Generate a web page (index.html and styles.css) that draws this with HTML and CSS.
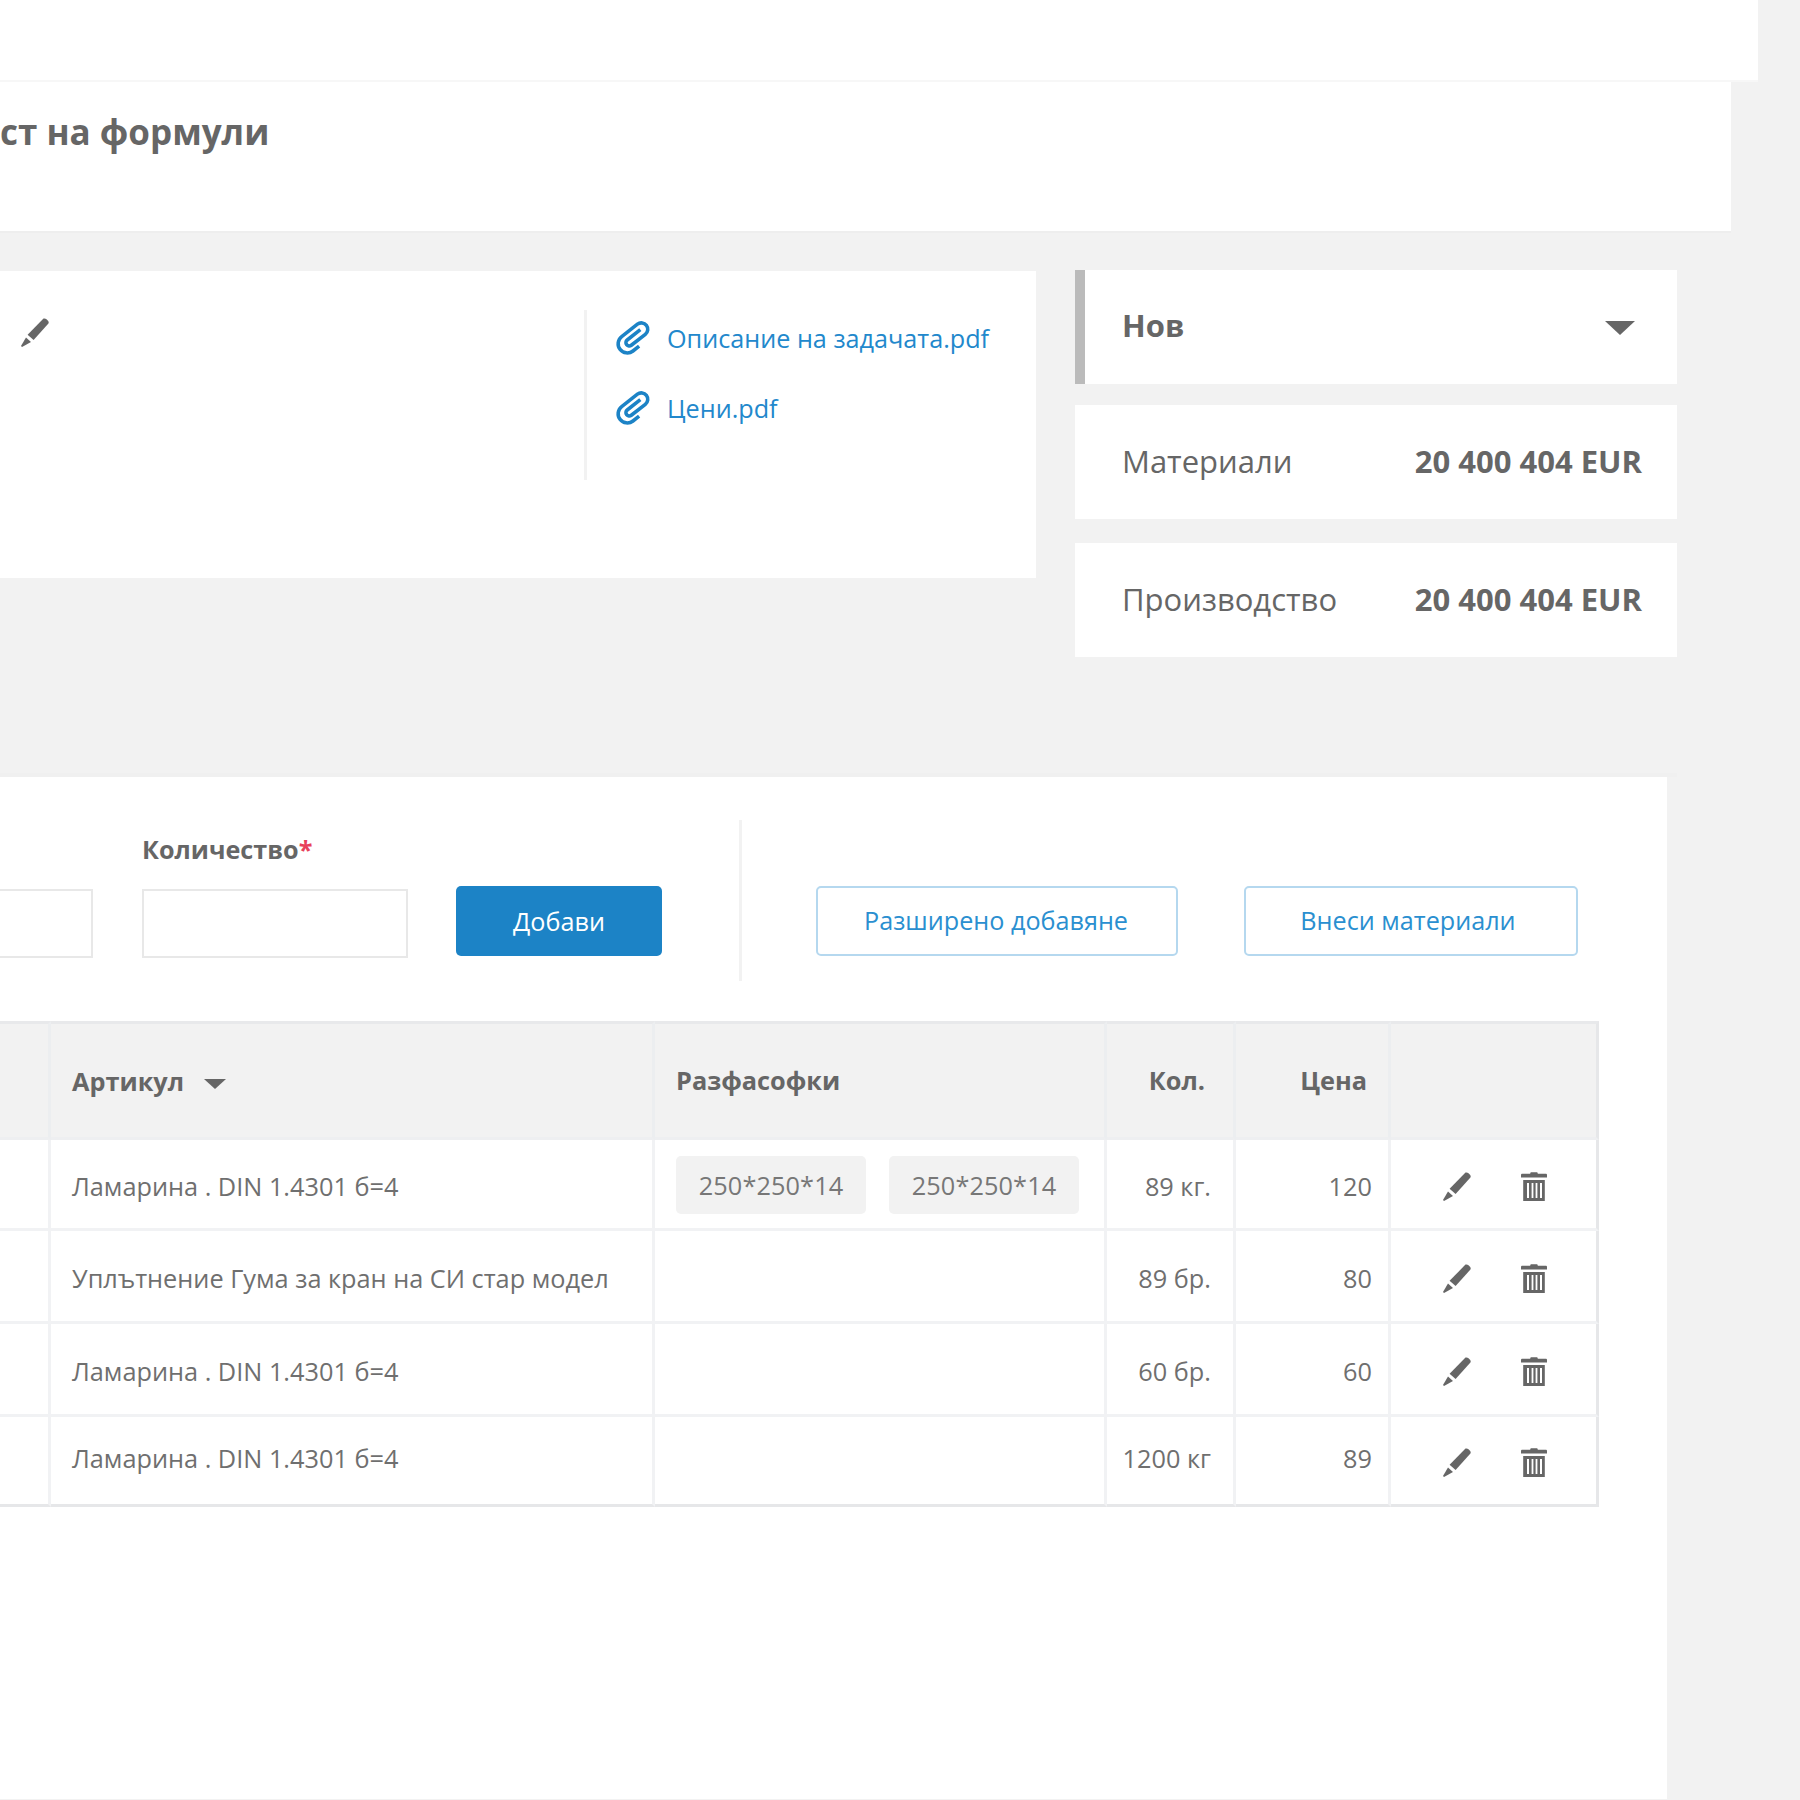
FILE: index.html
```html
<!DOCTYPE html>
<html lang="bg">
<head>
<meta charset="UTF-8">
<meta name="viewport" content="width=device-width, initial-scale=1.0">
<title>Лист на формули</title>
<link rel="stylesheet" href="styles.css">
</head>
<body>
    <div class="topbar"></div>
    <div class="page-head">
        <h1>ст на формули</h1>
    </div>

    <div class="summary">
        <div class="info-card">
            <div class="info-main">
                <svg class="icon pencil" viewBox="0 0 28 29"><use href="#ico-pencil"></use></svg>
            </div>
            <div class="files">
                <a class="file" href="#"><svg class="icon clip" viewBox="0 0 36 30"><use href="#ico-clip"></use></svg>Описание на задачата.pdf</a>
                <a class="file" href="#"><svg class="icon clip" viewBox="0 0 36 30"><use href="#ico-clip"></use></svg>Цени.pdf</a>
            </div>
        </div>
        <div class="totals">
            <div class="total-row status">
                <b>Нов</b>
                <span class="caret caret-big"></span>
            </div>
            <div class="total-row">
                <span>Материали</span>
                <b>20 400 404 EUR</b>
            </div>
            <div class="total-row total-last">
                <span>Производство</span>
                <b>20 400 404 EUR</b>
            </div>
        </div>
    </div>

    <div class="panel-wrap">
        <div class="panel">
            <form class="add-form">
                <div class="field field-cut">
                    <input type="text">
                </div>
                <div class="field field-qty">
                    <label>Количество<i>*</i></label>
                    <input type="text">
                </div>
                <button type="button" class="btn btn-primary">Добави</button>
                <div class="sep"></div>
                <button type="button" class="btn btn-outline btn-wide">Разширено добавяне</button>
                <button type="button" class="btn btn-outline btn-import">Внеси материали</button>
            </form>

            <table class="items">
                <colgroup>
                    <col class="c-first"><col class="c-article"><col class="c-packs"><col class="c-qty"><col class="c-price"><col class="c-actions">
                </colgroup>
                <thead>
                    <tr>
                        <th></th>
                        <th class="th-article">Артикул <span class="caret"></span></th>
                        <th>Разфасофки</th>
                        <th class="num th-qty">Кол.</th>
                        <th class="num">Цена</th>
                        <th></th>
                    </tr>
                </thead>
                <tbody>
                    <tr class="r1">
                        <td></td>
                        <td>Ламарина . DIN 1.4301 б=4</td>
                        <td class="tags"><span class="tag">250*250*14</span><span class="tag">250*250*14</span></td>
                        <td class="num">89 кг.</td>
                        <td class="num price">120</td>
                        <td class="actions">
                            <svg class="icon pencil" viewBox="0 0 28 29"><use href="#ico-pencil"></use></svg>
                            <svg class="icon trash" viewBox="0 0 26 29"><use href="#ico-trash"></use></svg>
                        </td>
                    </tr>
                    <tr class="r2">
                        <td></td>
                        <td>Уплътнение Гума за кран на СИ стар модел</td>
                        <td></td>
                        <td class="num">89 бр.</td>
                        <td class="num price">80</td>
                        <td class="actions">
                            <svg class="icon pencil" viewBox="0 0 28 29"><use href="#ico-pencil"></use></svg>
                            <svg class="icon trash" viewBox="0 0 26 29"><use href="#ico-trash"></use></svg>
                        </td>
                    </tr>
                    <tr class="r2">
                        <td></td>
                        <td>Ламарина . DIN 1.4301 б=4</td>
                        <td></td>
                        <td class="num">60 бр.</td>
                        <td class="num price">60</td>
                        <td class="actions">
                            <svg class="icon pencil" viewBox="0 0 28 29"><use href="#ico-pencil"></use></svg>
                            <svg class="icon trash" viewBox="0 0 26 29"><use href="#ico-trash"></use></svg>
                        </td>
                    </tr>
                    <tr class="r4">
                        <td></td>
                        <td>Ламарина . DIN 1.4301 б=4</td>
                        <td></td>
                        <td class="num">1200 кг</td>
                        <td class="num price">89</td>
                        <td class="actions">
                            <svg class="icon pencil" viewBox="0 0 28 29"><use href="#ico-pencil"></use></svg>
                            <svg class="icon trash" viewBox="0 0 26 29"><use href="#ico-trash"></use></svg>
                        </td>
                    </tr>
                </tbody>
            </table>
        </div>
    </div>

    <svg class="sprite" aria-hidden="true">
        <symbol id="ico-pencil" viewBox="0 0 28 29">
            <path d="M22.5 0.6 Q24 0 25.5 1.2 L27.2 3 Q28.2 4.4 27.2 5.8 L12.6 22 L6.6 16.8 Z"/>
            <path d="M5 19.4 L10 24 L1 29 L0 28 Z"/>
        </symbol>
        <symbol id="ico-trash" viewBox="0 0 26 29">
            <path d="M10 0.2 H16 Q16.8 0.2 16.8 1.8 H25 Q26 1.8 26 3 V5.6 H0 V3 Q0 1.8 1 1.8 H9.2 Q9.2 0.2 10 0.2 Z"/>
            <path fill-rule="evenodd" d="M2.2 8 H23.8 V29 H2.2 Z M6 11 V26 H8 V11 Z M10.6 11 V26 H12.4 V11 Z M14.6 11 V26 H16.4 V11 Z M19 11 V26 H21 V11 Z"/>
        </symbol>
        <symbol id="ico-clip" viewBox="0 0 36 30">
            <g transform="rotate(-38 18 15) translate(18 15) scale(1.15) translate(-17 -15)" fill="none" stroke="currentColor" stroke-width="3.2">
                <path d="M16 23 H9 a8.25 8.25 0 0 1 0 -16.5 H27 a5.75 5.75 0 0 1 0 11.5 H11 a3 3 0 0 1 0 -6 H26"/>
            </g>
        </symbol>
    </svg>
</body>
</html>
```

FILE: styles.css
```css
* {
    box-sizing: border-box;
}

body {
    font-family: "Open Sans", "Noto Sans", sans-serif;
    background-color: #f2f2f2;
    color: #666;
    margin: 0;
    padding: 0;
    overflow-x: hidden;
}

.sprite {
    display: none;
}

.topbar {
    width: 1758px;
    height: 82px;
    background-color: #fff;
    border-bottom: 2px solid #f7f7f7;
}

.page-head {
    width: 1731px;
    height: 151px;
    background-color: #fff;
    border-bottom: 2px solid #eee;
}

.page-head h1 {
    margin: 0;
    padding-top: 27px;
    font-size: 35px;
    line-height: 46px;
    font-weight: 700;
    color: #666;
}

.summary {
    display: flex;
    gap: 39px;
    align-items: flex-start;
    margin-top: 37px;
}

.info-card {
    width: 1036px;
    height: 307px;
    margin-top: 1px;
    background-color: #fff;
    display: flex;
    padding-top: 39px;
}

.info-main {
    width: 584px;
    padding: 8px 0 0 21px;
}

.files {
    height: 170px;
    border-left: 3px solid #f2f2f2;
    padding-left: 30px;
}

.file {
    display: flex;
    align-items: center;
    gap: 15px;
    height: 32px;
    margin-top: 12px;
    margin-bottom: 38px;
    font-size: 25.2px;
    color: #2288cc;
    text-decoration: none;
}

.icon {
    display: inline-block;
    fill: #666;
    flex: none;
}

.pencil {
    width: 28px;
    height: 29px;
}

.trash {
    width: 26px;
    height: 29px;
}

.clip {
    width: 35px;
    height: 29px;
    fill: none;
    color: #1c83c6;
    overflow: visible;
}

symbol {
    overflow: visible;
}

.totals {
    width: 602px;
    display: flex;
    flex-direction: column;
    gap: 21px;
}

.total-row {
    height: 114px;
    background-color: #fff;
    display: flex;
    align-items: center;
    justify-content: space-between;
    padding: 0 35px 3px 47px;
    font-size: 31px;
}

.total-last {
    margin-top: 3px;
}

.total-row b {
    font-weight: 700;
}

.status {
    border-left: 10px solid #bbb;
    padding: 0 42px 4px 37px;
}

.caret {
    display: inline-block;
    width: 0;
    height: 0;
    border-left: 11px solid transparent;
    border-right: 11px solid transparent;
    border-top: 10px solid #666;
    vertical-align: middle;
}

.caret-big {
    border-left-width: 15px;
    border-right-width: 15px;
    border-top-width: 14px;
    margin-top: 6px;
}

.panel-wrap {
    width: 1677px;
    margin-top: 116px;
    border-top: 4px solid #f0f0f0;
}

.panel {
    width: 1667px;
    min-height: 1022px;
    background-color: #fff;
    padding-top: 43px;
}

.add-form {
    display: flex;
    height: 161px;
    align-items: flex-start;
}

.field {
    display: flex;
    flex-direction: column;
}

.field label {
    font-size: 25.2px;
    line-height: 32px;
    font-weight: 700;
    margin-top: 13px;
    margin-bottom: 24px;
}

.field label i {
    color: #e8405a;
    font-style: normal;
}

.field input {
    height: 69px;
    border: 2px solid #e8e8e8;
    background-color: #fff;
    border-radius: 0;
    outline: none;
}

.field-cut {
    width: 93px;
    padding-top: 69px;
}

.field-cut input {
    width: 93px;
    border-left: none;
}

.field-qty {
    width: 266px;
    margin-left: 49px;
}

.btn {
    height: 70px;
    margin-top: 66px;
    font-family: inherit;
    font-size: 25.2px;
    border-radius: 5px;
    cursor: pointer;
}

.btn-primary {
    width: 206px;
    margin-left: 48px;
    background-color: #1c83c6;
    border: none;
    color: #fff;
}

.btn-outline {
    background-color: #fff;
    border: 2px solid #b5d8ef;
    color: #2a8fd0;
    padding-bottom: 4px;
}

.btn-wide {
    width: 362px;
    margin-left: 74px;
    padding-right: 8px;
}

.btn-import {
    width: 334px;
    margin-left: 66px;
    padding-right: 12px;
}

.sep {
    width: 3px;
    height: 161px;
    margin-left: 77px;
    background-color: #f2f2f2;
}

.items {
    width: 1599px;
    margin-top: 40px;
    border-collapse: separate;
    border-spacing: 0;
    table-layout: fixed;
    font-size: 25.3px;
}

.c-first { width: 51px; }
.c-article { width: 604px; }
.c-packs { width: 452px; }
.c-qty { width: 129px; }
.c-price { width: 155px; }
.c-actions { width: 208px; }

.items th,
.items td {
    border-right: 3px solid #f1f2f4;
    border-bottom: 3px solid #f1f2f4;
    padding: 0 21px;
    text-align: left;
    vertical-align: middle;
    color: #666;
}

.items td {
    padding-top: 3px;
    color: #6f6f6f;
}

.items th {
    height: 119px;
    background-color: #f2f2f2;
    border-top: 3px solid #e8e9eb;
    border-bottom-color: #eeeff1;
    border-right-color: #eceef0;
    padding-bottom: 2px;
    font-weight: 700;
}

.items th.th-article {
    padding-bottom: 0;
}

.items th:last-child,
.items td:last-child {
    border-right-color: #e6e7e9;
}

.items .r1 td { height: 91px; }
.items .r2 td { height: 93px; }
.items .r4 td {
    height: 90px;
    border-bottom-color: #e6e7e9;
    padding-top: 0;
    padding-bottom: 6px;
}

.items .num {
    text-align: right;
    padding-right: 22px;
    padding-left: 0;
}

.items .price {
    padding-right: 16px;
}

.items th.num {
    padding-right: 21px;
}

.items th.th-qty {
    padding-right: 28px;
}

.th-article .caret {
    margin-left: 13px;
}

.items .tags {
    padding: 2px 0 0 21px;
}

.tag {
    display: inline-flex;
    align-items: center;
    justify-content: center;
    width: 190px;
    height: 58px;
    margin-right: 23px;
    background-color: #f2f2f2;
    border-radius: 5px;
    color: #777;
    letter-spacing: 0.1px;
}

.items .actions,
.items .r4 .actions {
    padding: 4px 0 0 52px;
    white-space: nowrap;
    font-size: 0;
}

.actions .pencil {
    margin-right: 50px;
}
```
